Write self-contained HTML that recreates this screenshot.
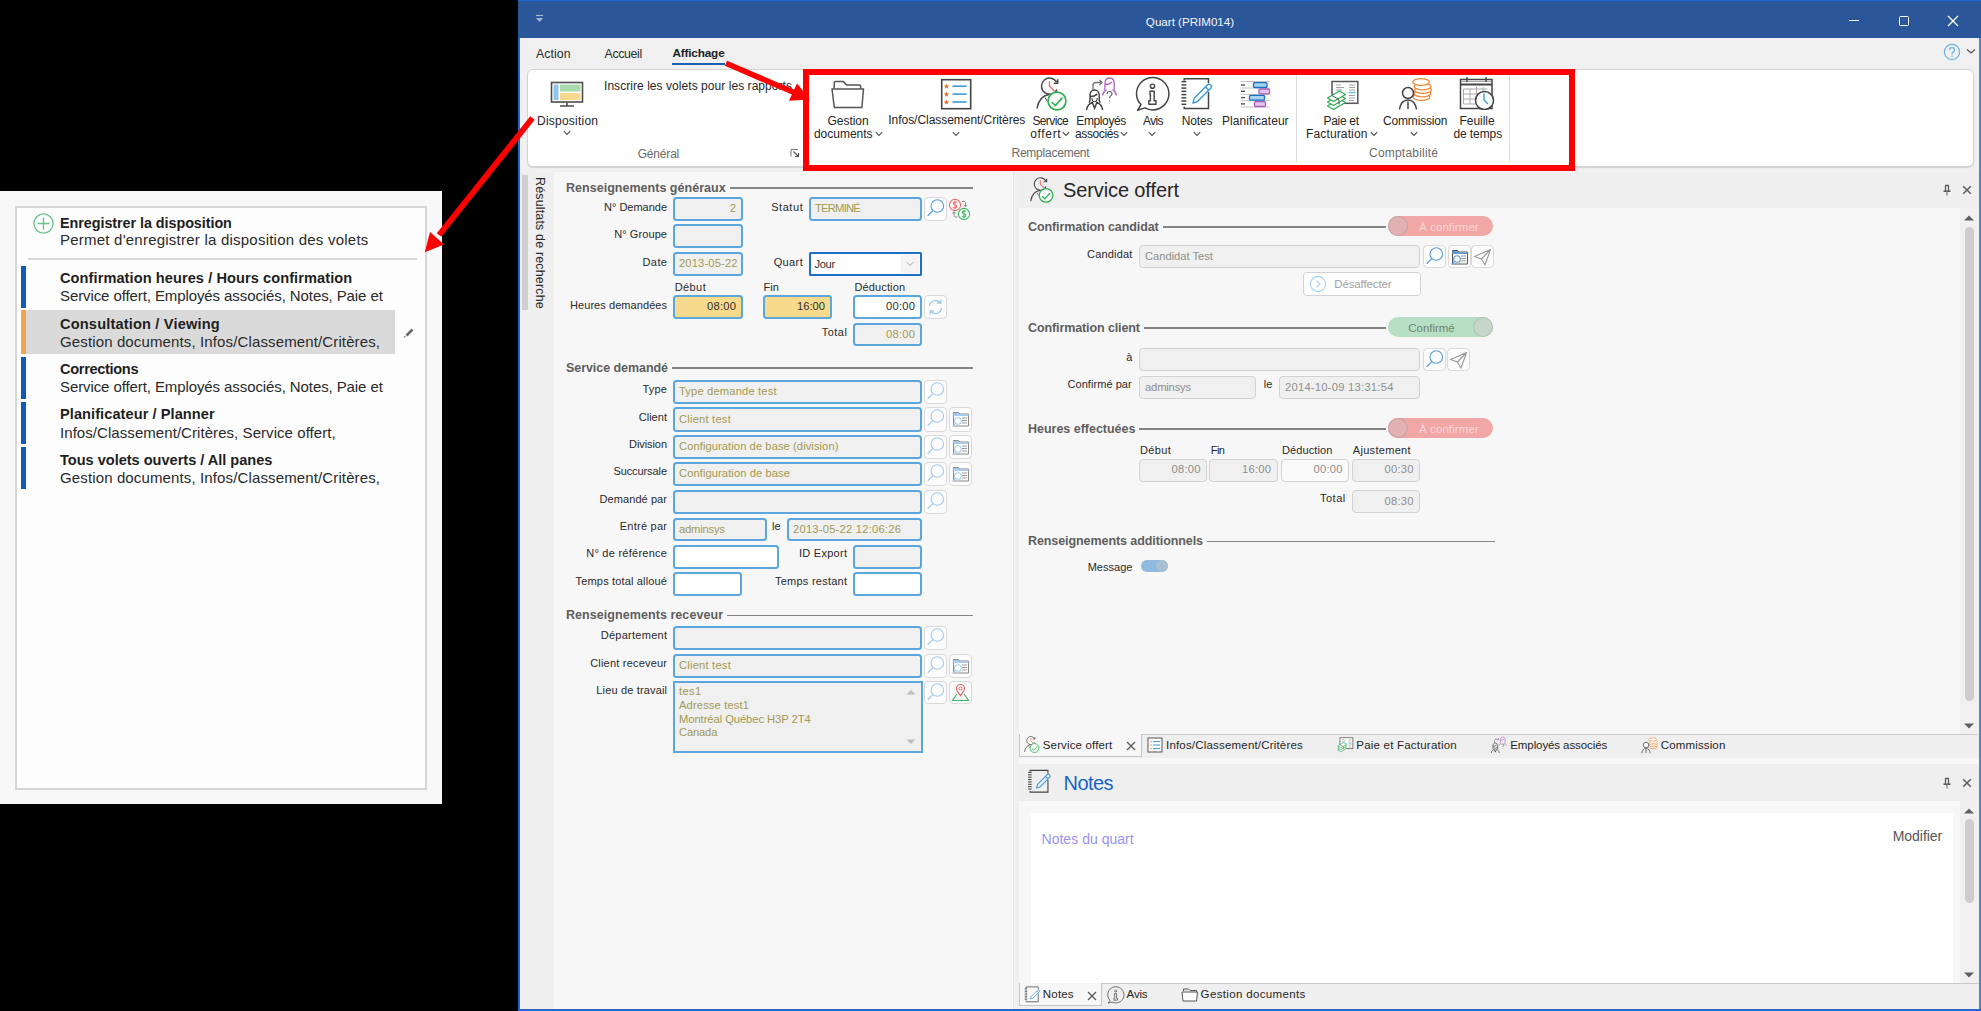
<!DOCTYPE html><html><head><meta charset="utf-8"><style>
html,body{margin:0;padding:0}
body{width:1981px;height:1011px;overflow:hidden;background:#000;position:relative;font-family:"Liberation Sans",sans-serif}
.a{position:absolute;box-sizing:border-box}
.t{position:absolute;white-space:nowrap;font-family:"Liberation Sans",sans-serif}
</style></head><body>
<div class="a" style="left:0px;top:191px;width:442px;height:613px;background:#f8f8f8"></div>
<div class="a" style="left:15px;top:206px;width:412px;height:584px;background:#fdfdfd;border:2px solid #d6d6d6"></div>
<svg class="a" style="left:32px;top:212px;" width="23" height="23" viewBox="0 0 23 23"><circle cx="11.5" cy="11.5" r="9.6" fill="none" stroke="#6cc58c" stroke-width="1.4"/><path d="M11.5 5.5v12M5.5 11.5h12" stroke="#6cc58c" stroke-width="1.4"/></svg>
<div class="t" style="left:60px;top:215.76px;font-size:14.4px;line-height:14.4px;font-weight:700;color:#1f1f1f;letter-spacing:-0.065px;">Enregistrer la disposition</div>
<div class="t" style="left:60px;top:232.25px;font-size:15px;line-height:15px;font-weight:400;color:#2a2a2a;letter-spacing:0.229px;">Permet d'enregistrer la disposition des volets</div>
<div class="a" style="left:28px;top:258px;width:389px;height:2px;background:#d8d8d8"></div>
<div class="a" style="left:21px;top:265.8px;width:5px;height:42px;background:#0f5cb2"></div>
<div class="t" style="left:60px;top:271.19px;font-size:14.6px;line-height:14.6px;font-weight:700;color:#1f1f1f;letter-spacing:0.069px;">Confirmation heures / Hours confirmation</div>
<div class="t" style="left:60px;top:288.35px;font-size:15px;line-height:15px;font-weight:400;color:#2a2a2a;letter-spacing:-0.095px;">Service offert, Employés associés, Notes, Paie et</div>
<div class="a" style="left:26px;top:309.5px;width:369px;height:44.5px;background:#dadada"></div>
<div class="a" style="left:21px;top:309.5px;width:5px;height:44.5px;background:#f0a64c"></div>
<div class="t" style="left:60px;top:316.59px;font-size:14.6px;line-height:14.6px;font-weight:700;color:#1f1f1f;letter-spacing:0.163px;">Consultation / Viewing</div>
<div class="t" style="left:60px;top:333.75px;font-size:15px;line-height:15px;font-weight:400;color:#2a2a2a;letter-spacing:0.13px;">Gestion documents, Infos/Classement/Critères,</div>
<div class="a" style="left:21px;top:356.6px;width:5px;height:42px;background:#0f5cb2"></div>
<div class="t" style="left:60px;top:361.99px;font-size:14.6px;line-height:14.6px;font-weight:700;color:#1f1f1f;letter-spacing:-0.334px;">Corrections</div>
<div class="t" style="left:60px;top:379.15px;font-size:15px;line-height:15px;font-weight:400;color:#2a2a2a;letter-spacing:-0.095px;">Service offert, Employés associés, Notes, Paie et</div>
<div class="a" style="left:21px;top:402.0px;width:5px;height:42px;background:#0f5cb2"></div>
<div class="t" style="left:60px;top:407.39px;font-size:14.6px;line-height:14.6px;font-weight:700;color:#1f1f1f;letter-spacing:0.061px;">Planificateur / Planner</div>
<div class="t" style="left:60px;top:424.55px;font-size:15px;line-height:15px;font-weight:400;color:#2a2a2a;letter-spacing:0.062px;">Infos/Classement/Critères, Service offert,</div>
<div class="a" style="left:21px;top:447.4px;width:5px;height:42px;background:#0f5cb2"></div>
<div class="t" style="left:60px;top:452.79px;font-size:14.6px;line-height:14.6px;font-weight:700;color:#1f1f1f;letter-spacing:-0.029px;">Tous volets ouverts / All panes</div>
<div class="t" style="left:60px;top:469.95px;font-size:15px;line-height:15px;font-weight:400;color:#2a2a2a;letter-spacing:0.13px;">Gestion documents, Infos/Classement/Critères,</div>
<svg class="a" style="left:402px;top:326px;" width="13" height="13" viewBox="0 0 13 13"><path d="M4.5 9.5L10.5 3.5" stroke="#6a6a6a" stroke-width="2.6"/><path d="M2 11.5l1.6-1.6" stroke="#888" stroke-width="1.2"/></svg>
<div class="a" style="left:518px;top:0px;width:1463px;height:1011px;background:#f0f0f0"></div>
<div class="a" style="left:518px;top:0px;width:2px;height:1011px;background:#2a66c9"></div>
<div class="a" style="left:1979px;top:0px;width:2px;height:1011px;background:#4a86d4"></div>
<div class="a" style="left:518px;top:1009px;width:1463px;height:2px;background:#2a66c9"></div>
<div class="a" style="left:518px;top:0px;width:1463px;height:38px;background:#2b579a"></div>
<div class="a" style="left:518px;top:0px;width:1463px;height:1px;background:#1a6ad6"></div>
<div class="t" style="left:790px;width:800px;text-align:center;top:15.94px;font-size:11.6px;line-height:11.6px;font-weight:400;color:#f4f6fa;">Quart (PRIM014)</div>
<svg class="a" style="left:534px;top:13px;" width="11" height="11" viewBox="0 0 11 11"><path d="M2 2.5h7" stroke="#a8b6cc" stroke-width="1.2"/><path d="M2 5l3.5 4 3.5-4z" fill="#a8b6cc"/></svg>
<div class="a" style="left:1849px;top:20px;width:10px;height:1.3px;background:#fff"></div>
<div class="a" style="left:1899px;top:16px;width:10px;height:10px;border:1.3px solid #fff;border-radius:1.5px"></div>
<svg class="a" style="left:1947px;top:15px;" width="12" height="12" viewBox="0 0 12 12"><path d="M1 1L11 11M11 1L1 11" stroke="#fff" stroke-width="1.3"/></svg>
<div class="t" style="left:536px;top:47.95px;font-size:12.3px;line-height:12.3px;font-weight:400;color:#2b2b2b;letter-spacing:0.063px;">Action</div>
<div class="t" style="left:604.6px;top:47.95px;font-size:12.3px;line-height:12.3px;font-weight:400;color:#2b2b2b;letter-spacing:-0.342px;">Accueil</div>
<div class="t" style="left:672.5px;top:48.37px;font-size:11.8px;line-height:11.8px;font-weight:700;color:#1f1f1f;letter-spacing:-0.195px;">Affichage</div>
<div class="a" style="left:672px;top:63px;width:53px;height:2px;background:#1a5fb4"></div>
<svg class="a" style="left:1943px;top:43px;" width="18" height="18" viewBox="0 0 18 18"><circle cx="9" cy="9" r="7.6" fill="none" stroke="#6cb2e4" stroke-width="1.2"/><path d="M6.5 7a2.5 2.5 0 1 1 3.3 2.4c-.6.3-.8.7-.8 1.4v.6" fill="none" stroke="#6cb2e4" stroke-width="1.2"/><circle cx="9" cy="13.3" r=".8" fill="#6cb2e4"/></svg>
<svg class="a" style="left:1966px;top:48px;" width="10" height="7" viewBox="0 0 10 7"><path d="M1 1.5l4 3.5 4-3.5" fill="none" stroke="#555" stroke-width="1.3"/></svg>
<div class="a" style="left:527px;top:69px;width:1447px;height:98px;background:#fff;border:1px solid #d4d4d4;border-radius:6px;box-shadow:0 1px 1px rgba(0,0,0,0.12)"></div>
<svg class="a" style="left:550px;top:81px;" width="34" height="27" viewBox="0 0 34 27"><rect x="1.5" y="1.5" width="31" height="19.5" fill="#fff" stroke="#4d4d4d" stroke-width="1.6"/><rect x="3.5" y="3.5" width="5" height="15.5" fill="#8ec6ee"/><rect x="10" y="3.5" width="20.5" height="7" fill="#a9d9ac"/><rect x="10" y="12" width="20.5" height="7" fill="#f6d98e"/><path d="M17 21.5v3M10 25h14" stroke="#4d4d4d" stroke-width="1.6"/></svg>
<div class="t" style="left:537px;top:114.7px;font-size:12px;line-height:12px;font-weight:400;color:#262626;letter-spacing:0.231px;">Disposition</div>
<svg class="a" style="left:563px;top:130px;" width="8" height="6" viewBox="0 0 8 6"><path d="M0.8 1.2L4 4.4L7.2 1.2" fill="none" stroke="#555" stroke-width="1.2"/></svg>
<div class="t" style="left:604px;top:80.2px;font-size:12px;line-height:12px;font-weight:400;color:#262626;letter-spacing:0.053px;">Inscrire les volets pour les rapports</div>
<div class="t" style="left:637.7px;top:147.7px;font-size:12px;line-height:12px;font-weight:400;color:#6b6b6b;letter-spacing:-0.182px;">Général</div>
<svg class="a" style="left:790px;top:148px;" width="10" height="10" viewBox="0 0 10 10"><path d="M1 8.5V1.5h7" fill="none" stroke="#777" stroke-width="1"/><path d="M3.5 3.5L8.5 8.5M5 8.5h3.5V5" fill="none" stroke="#555" stroke-width="1.2"/></svg>
<svg class="a" style="left:830px;top:80px;" width="36" height="30" viewBox="0 0 36 30"><path d="M4.2 8.5V3.2c0-1 .6-1.6 1.6-1.6h7.4l3.3 3.3h12.7c.9 0 1.5.6 1.5 1.5v2.3" fill="none" stroke="#555" stroke-width="1.5"/><path d="M2 9h31.5l-1.6 18.5H4.3z" fill="#fff" stroke="#555" stroke-width="1.5" stroke-linejoin="round"/></svg>
<div class="t" style="left:827.6px;top:114.5px;font-size:12px;line-height:12px;font-weight:400;color:#262626;letter-spacing:-0.059px;">Gestion</div>
<div class="t" style="left:813.9px;top:128.4px;font-size:12px;line-height:12px;font-weight:400;color:#262626;letter-spacing:0.0px;">documents</div>
<svg class="a" style="left:875px;top:130.7px;" width="8" height="6" viewBox="0 0 8 6"><path d="M0.8 1.2L4 4.4L7.2 1.2" fill="none" stroke="#555" stroke-width="1.2"/></svg>
<svg class="a" style="left:940px;top:78px;" width="33" height="32" viewBox="0 0 33 32"><rect x="1.7" y="1.7" width="29" height="29" fill="#fff" stroke="#444" stroke-width="1.6"/><path d="M6.5 5.6l.8 1.8 1.9.2-1.4 1.3.4 1.9-1.7-1-1.7 1 .4-1.9-1.4-1.3 1.9-.2z" fill="#e8782a"/><path d="M12.5 8.2h14" stroke="#3d9ad6" stroke-width="1.6"/><path d="M6.5 13.500000000000002l.8 1.8 1.9.2-1.4 1.3.4 1.9-1.7-1-1.7 1 .4-1.9-1.4-1.3 1.9-.2z" fill="#e8782a"/><path d="M12.5 16.1h14" stroke="#3d9ad6" stroke-width="1.6"/><path d="M6.5 21.4l.8 1.8 1.9.2-1.4 1.3.4 1.9-1.7-1-1.7 1 .4-1.9-1.4-1.3 1.9-.2z" fill="#e8782a"/><path d="M12.5 24h14" stroke="#3d9ad6" stroke-width="1.6"/></svg>
<div class="t" style="left:888.3px;top:114.4px;font-size:12px;line-height:12px;font-weight:400;color:#262626;letter-spacing:-0.044px;">Infos/Classement/Critères</div>
<svg class="a" style="left:951.7px;top:130.7px;" width="8" height="6" viewBox="0 0 8 6"><path d="M0.8 1.2L4 4.4L7.2 1.2" fill="none" stroke="#555" stroke-width="1.2"/></svg>
<svg class="a" style="left:1036px;top:77px;" width="34" height="34" viewBox="0 0 34 34"><path d="M21 12.5A8.1 8.1 0 1 1 20.7 5.2" fill="none" stroke="#4a4a4a" stroke-width="1.5"/><path d="M17.8 6.2h3.9V2.3" fill="none" stroke="#4a4a4a" stroke-width="1.6"/><path d="M13.5 4.3v4.9l5 5" fill="none" stroke="#ee6e6e" stroke-width="1.4"/><path d="M1 31.5c1.2-7.5 5.5-13 12-14" fill="none" stroke="#4a4a4a" stroke-width="1.5"/><path d="M9 20.5l2.5 4" stroke="#4a4a4a" stroke-width="1"/><circle cx="21" cy="24" r="8.9" fill="#fff" stroke="#2fae52" stroke-width="1.7"/><path d="M15.7 25l3.6 3.5 7.2-7.8" fill="none" stroke="#2fae52" stroke-width="1.7"/></svg>
<div class="t" style="left:1032.4px;top:114.9px;font-size:12px;line-height:12px;font-weight:400;color:#262626;letter-spacing:-0.602px;">Service</div>
<div class="t" style="left:1030.3px;top:128.4px;font-size:12px;line-height:12px;font-weight:400;color:#262626;letter-spacing:0.634px;">offert</div>
<svg class="a" style="left:1062px;top:130.7px;" width="8" height="6" viewBox="0 0 8 6"><path d="M0.8 1.2L4 4.4L7.2 1.2" fill="none" stroke="#555" stroke-width="1.2"/></svg>
<svg class="a" style="left:1084px;top:76px;" width="36" height="36" viewBox="0 0 36 36"><g transform="translate(-3,-1.5)"><path d="M9 20.5c0-3 2-5 4.6-5s4.6 2 4.6 5v5.5c0 1 .8 1.5 1.2 2M9 20.5v5.5c0 1-.8 1.5-1.2 2M9.5 22c2.4 0 5.2-.8 6.6-2.5" fill="none" stroke="#3c3c3c" stroke-width="1.4"/><path d="M11 23.5c0 2 1 3.8 2.6 3.8s2.6-1.8 2.6-3.8" fill="none" stroke="#3c3c3c" stroke-width="1.1"/><path d="M5.5 35.5c.6-4 3-6.5 5.8-7.5l2.3 5.8 2.3-5.8c2.8 1 5.2 3.5 5.8 7.5" fill="none" stroke="#3c3c3c" stroke-width="1.4"/><path d="M12 15.5V11c0-2 1.2-3 3-3h5.5M18.5 5.5l2.6 2.5-2.6 2.5" fill="none" stroke="#777" stroke-width="1.4"/><path d="M24 9c0-3.5 2-5.5 4.6-5.5s4.6 2 4.6 5.5v4.5c0 1 .6 1.3 1 1.6M24 9v4.5c0 1-.6 1.3-1 1.6M24.5 10c2.2 0 4.8-.7 6.4-2.5" fill="none" stroke="#b165c2" stroke-width="1.3"/><path d="M21.5 21c.5-3 2-4.8 4-5.8M35.5 21c-.5-3-2-4.8-4-5.8" fill="none" stroke="#b165c2" stroke-width="1.3"/><path d="M26.2 19.5c0-1.5 1.1-2.5 2.4-2.5s2.4 1 2.4 2.3c0 1.8-2.4 2-2.4 4.2M28.6 26.2v.8" fill="none" stroke="#666" stroke-width="1.2"/></g></svg>
<div class="t" style="left:1076.3px;top:114.9px;font-size:12px;line-height:12px;font-weight:400;color:#262626;letter-spacing:-0.384px;">Employés</div>
<div class="t" style="left:1075.1px;top:128.4px;font-size:12px;line-height:12px;font-weight:400;color:#262626;letter-spacing:-0.398px;">associés</div>
<svg class="a" style="left:1120px;top:130.7px;" width="8" height="6" viewBox="0 0 8 6"><path d="M0.8 1.2L4 4.4L7.2 1.2" fill="none" stroke="#555" stroke-width="1.2"/></svg>
<svg class="a" style="left:1135px;top:76px;" width="36" height="36" viewBox="0 0 36 36"><path d="M6 28.5C3 25.5 1.5 21.7 1.5 17.7 1.5 8.8 8.8 1.5 17.7 1.5S33.9 8.8 33.9 17.7 26.6 33.9 17.7 33.9c-2.8 0-5.5-.7-7.8-2L2.5 34.3z" fill="none" stroke="#444" stroke-width="1.5" stroke-linejoin="round"/><circle cx="17.5" cy="10.2" r="2.1" fill="none" stroke="#444" stroke-width="1.4"/><path d="M15 15.3h4.2v9.4h1.8v3.6h-7.2v-3.6h1.6v-5.8H15z" fill="none" stroke="#444" stroke-width="1.4" stroke-linejoin="round"/></svg>
<div class="t" style="left:1143px;top:114.9px;font-size:12px;line-height:12px;font-weight:400;color:#262626;letter-spacing:-0.618px;">Avis</div>
<svg class="a" style="left:1148.4px;top:130.6px;" width="8" height="6" viewBox="0 0 8 6"><path d="M0.8 1.2L4 4.4L7.2 1.2" fill="none" stroke="#555" stroke-width="1.2"/></svg>
<svg class="a" style="left:1180px;top:77px;" width="34" height="34" viewBox="0 0 34 34"><path d="M4.2 3.5V1.8h24.3v4.5M28.5 15v16.5H4.2v-1.7" fill="none" stroke="#444" stroke-width="1.5"/><path d="M1.5 4.6h4.8" stroke="#444" stroke-width="1.5"/><path d="M1.5 7.9h4.8" stroke="#444" stroke-width="1.5"/><path d="M1.5 11.1h4.8" stroke="#444" stroke-width="1.5"/><path d="M1.5 14.3h4.8" stroke="#444" stroke-width="1.5"/><path d="M1.5 17.6h4.8" stroke="#444" stroke-width="1.5"/><path d="M1.5 20.8h4.8" stroke="#444" stroke-width="1.5"/><path d="M1.5 24h4.8" stroke="#444" stroke-width="1.5"/><path d="M1.5 27.3h4.8" stroke="#444" stroke-width="1.5"/><path d="M13 26l1.2-4.8 13.4-13.4c.8-.8 2-.8 2.8 0l.5.5c.8.8.8 2 0 2.8L17.5 24.5zM25.5 10l3.3 3.3" fill="none" stroke="#3a9ad9" stroke-width="1.4" stroke-linejoin="round"/></svg>
<div class="t" style="left:1181.7px;top:114.9px;font-size:12px;line-height:12px;font-weight:400;color:#262626;letter-spacing:-0.112px;">Notes</div>
<svg class="a" style="left:1192.9px;top:130.6px;" width="8" height="6" viewBox="0 0 8 6"><path d="M0.8 1.2L4 4.4L7.2 1.2" fill="none" stroke="#555" stroke-width="1.2"/></svg>
<svg class="a" style="left:1239px;top:79px;" width="33" height="30" viewBox="0 0 33 30"><path d="M1.5 2.5h29" stroke="#c4c4c4" stroke-width="1"/><path d="M1.5 9h29" stroke="#c4c4c4" stroke-width="1"/><path d="M1.5 15.4h29" stroke="#c4c4c4" stroke-width="1"/><path d="M1.5 21.7h29" stroke="#c4c4c4" stroke-width="1"/><path d="M1.5 28h29" stroke="#c4c4c4" stroke-width="1"/><path d="M2 6h4" stroke="#555" stroke-width="1.4"/><path d="M2 12.3h4" stroke="#555" stroke-width="1.4"/><path d="M2 18.6h4" stroke="#555" stroke-width="1.4"/><path d="M2 24.9h4" stroke="#555" stroke-width="1.4"/><rect x="14.5" y="3.7" width="13.5" height="4.8" rx="1" fill="#a8d4f2" stroke="#1b6ec2" stroke-width="1.3"/><rect x="20" y="10" width="10.5" height="4.8" rx="1" fill="#e6c4ea" stroke="#a95cb9" stroke-width="1.3"/><rect x="10.5" y="16.4" width="15" height="4.8" rx="1" fill="#a8d4f2" stroke="#1b6ec2" stroke-width="1.3"/><rect x="15.5" y="22.7" width="11" height="4.8" rx="1" fill="#e6c4ea" stroke="#a95cb9" stroke-width="1.3"/></svg>
<div class="t" style="left:1222px;top:114.9px;font-size:12px;line-height:12px;font-weight:400;color:#262626;letter-spacing:0.047px;">Planificateur</div>
<div class="a" style="left:1296px;top:75px;width:1px;height:87px;background:#dcdcdc"></div>
<div class="t" style="left:1011.5px;top:147.1px;font-size:12px;line-height:12px;font-weight:400;color:#6b6b6b;letter-spacing:-0.237px;">Remplacement</div>
<svg class="a" style="left:1325.5px;top:80px;" width="34" height="32" viewBox="0 0 34 32"><rect x="6" y="1.5" width="25.8" height="21.8" fill="#fff" stroke="#555" stroke-width="1.5"/><path d="M10 5h5M10 7.5h8M10 10h6M23 5h6M23 7.5h6M23 10h6M23 15.5h6M23 18h6M23 20.5h5" stroke="#9a9a9a" stroke-width="0.9"/><path d="M22.5 12.5h7" stroke="#6cc3dc" stroke-width="1.6"/><path d="M1.5 26l12-7 6 3.5-12 7z" fill="#fff" stroke="#2fae52" stroke-width="1.3" stroke-linejoin="round"/><path d="M1.5 22l12-7 6 3.5-12 7z" fill="#fff" stroke="#2fae52" stroke-width="1.3" stroke-linejoin="round"/><path d="M1.5 18l12-7 6 3.5-12 7z" fill="#fff" stroke="#2fae52" stroke-width="1.3" stroke-linejoin="round"/><path d="M6 15.5l7 4v5" fill="none" stroke="#555" stroke-width="1"/></svg>
<div class="t" style="left:1323.5px;top:114.9px;font-size:12px;line-height:12px;font-weight:400;color:#262626;letter-spacing:-0.31px;">Paie et</div>
<div class="t" style="left:1306px;top:128.4px;font-size:12px;line-height:12px;font-weight:400;color:#262626;letter-spacing:0.137px;">Facturation</div>
<svg class="a" style="left:1370px;top:130.7px;" width="8" height="6" viewBox="0 0 8 6"><path d="M0.8 1.2L4 4.4L7.2 1.2" fill="none" stroke="#555" stroke-width="1.2"/></svg>
<svg class="a" style="left:1398px;top:77px;" width="36" height="34" viewBox="0 0 36 34"><ellipse cx="23.5" cy="20" rx="8.3" ry="3.3" fill="#fff" stroke="#ef8a3a" stroke-width="1.3"/><ellipse cx="24.5" cy="16.5" rx="8.3" ry="3.3" fill="#fff" stroke="#ef8a3a" stroke-width="1.3"/><ellipse cx="25" cy="13" rx="8.3" ry="3.3" fill="#fff" stroke="#ef8a3a" stroke-width="1.3"/><ellipse cx="24.5" cy="9.5" rx="8.3" ry="3.3" fill="#fff" stroke="#ef8a3a" stroke-width="1.3"/><ellipse cx="23" cy="5" rx="8.3" ry="3.3" fill="#fff" stroke="#ef8a3a" stroke-width="1.3"/><circle cx="10" cy="16" r="5.5" fill="#fff" stroke="#444" stroke-width="1.5"/><path d="M1.5 32.5c.8-6 4-9.5 8.5-9.5s7.7 3.5 8.5 9.5M10 24.5v7.5" fill="none" stroke="#444" stroke-width="1.5"/></svg>
<div class="t" style="left:1383.1px;top:114.9px;font-size:12px;line-height:12px;font-weight:400;color:#262626;letter-spacing:-0.19px;">Commission</div>
<svg class="a" style="left:1410.3px;top:130.6px;" width="8" height="6" viewBox="0 0 8 6"><path d="M0.8 1.2L4 4.4L7.2 1.2" fill="none" stroke="#555" stroke-width="1.2"/></svg>
<svg class="a" style="left:1459px;top:76px;" width="36" height="34" viewBox="0 0 36 34"><rect x="1.5" y="3.5" width="31.5" height="29" fill="#fff" stroke="#444" stroke-width="1.5"/><path d="M1.5 8.5h31.5" stroke="#444" stroke-width="2"/><path d="M2 5.5h30" stroke="#aaa" stroke-width="1"/><path d="M8 1v5M27 1v5" stroke="#444" stroke-width="1.4"/><path d="M4.5 13h24M4.5 18h24M4.5 23h24M4.5 28h24M4.5 13v15M11 13v15M17.5 11v17M24 11v17" stroke="#aaa" stroke-width="1"/><circle cx="25.5" cy="24.5" r="9" fill="#fff" stroke="#444" stroke-width="1.5"/><path d="M25 17.5v6.5l4 4" fill="none" stroke="#3a9ad9" stroke-width="1.4"/></svg>
<div class="t" style="left:1459.5px;top:114.9px;font-size:12px;line-height:12px;font-weight:400;color:#262626;letter-spacing:-0.042px;">Feuille</div>
<div class="t" style="left:1453.4px;top:128.4px;font-size:12px;line-height:12px;font-weight:400;color:#262626;letter-spacing:-0.08px;">de temps</div>
<div class="a" style="left:1509px;top:75px;width:1px;height:87px;background:#dcdcdc"></div>
<div class="t" style="left:1369px;top:147.1px;font-size:12px;line-height:12px;font-weight:400;color:#6b6b6b;letter-spacing:0.209px;">Comptabilité</div>
<div class="a" style="left:520px;top:172px;width:34px;height:837px;background:#efefef"></div>
<div class="a" style="left:522px;top:175px;width:6px;height:135px;background:#cfcfcf"></div>
<div class="t" style="left:540px;top:177px;transform-origin:0 0;transform:rotate(90deg) translate(0,-7px);font-size:12.5px;line-height:14px;color:#2a2a2a;letter-spacing:0.15px">Résultats de recherche</div>
<div class="a" style="left:554px;top:172px;width:459px;height:837px;background:#f7f7f7"></div>
<div class="a" style="left:1013px;top:172px;width:6px;height:837px;background:#f0f0f0"></div>
<div class="t" style="left:566px;top:181.88px;font-size:12.5px;line-height:12.5px;font-weight:700;color:#5e5e5e;letter-spacing:0.024px;">Renseignements généraux</div>
<div class="a" style="left:729.6px;top:187.3px;width:243.39999999999998px;height:1.5px;background:#858585"></div>
<div class="t" style="right:1314px;top:201.65px;font-size:11px;line-height:11px;font-weight:400;color:#2a2a2a;letter-spacing:-0.011px;margin-right:0.011px;">N° Demande</div>
<div class="a" style="left:673px;top:197px;width:70px;height:24px;background:#f0f0f0;border:2px solid #5aa6dd;border-radius:3.5px"></div>
<div class="t" style="right:1245px;top:203.38px;font-size:11.2px;line-height:11.2px;font-weight:400;color:#a29a52;">2</div>
<div class="t" style="right:1178.3px;top:201.65px;font-size:11px;line-height:11px;font-weight:400;color:#2a2a2a;letter-spacing:0.552px;margin-right:-0.552px;">Statut</div>
<div class="a" style="left:809px;top:197px;width:113px;height:24px;background:#f0f0f0;border:2px solid #5aa6dd;border-radius:3.5px"></div>
<div class="t" style="left:815px;top:203.38px;font-size:11.2px;line-height:11.2px;font-weight:400;color:#a29a52;letter-spacing:-0.767px;">TERMINÉ</div>
<div class="a" style="left:924px;top:197px;width:23px;height:24px;background:#fcfcfc;border:1px solid #d9d9d9;border-radius:4px"></div>
<svg class="a" style="left:924px;top:197px;" width="23" height="24" viewBox="0 0 23 24"><circle cx="13.3" cy="9" r="6.3" fill="none" stroke="#5b9bd5" stroke-width="1.1"/><path d="M8.8 13.6L3.7 18.8" stroke="#5b9bd5" stroke-width="1.3"/></svg>
<svg class="a" style="left:948px;top:197px;" width="24" height="24" viewBox="0 0 24 24"><circle cx="7" cy="8" r="5.6" fill="#fff" stroke="#ef6b6b" stroke-width="1.1"/><path d="M9 5.5c-.5-.8-3.5-1.2-3.8.6-.3 1.9 3.6 1.3 3.6 3.5 0 1.8-3.3 1.8-4 .6M7 3.8v8.4" fill="none" stroke="#ef6b6b" stroke-width="1.1"/><circle cx="16" cy="17" r="5.6" fill="#fff" stroke="#3fb564" stroke-width="1.1"/><path d="M18 14.5c-.5-.8-3.5-1.2-3.8.6-.3 1.9 3.6 1.3 3.6 3.5 0 1.8-3.3 1.8-4 .6M16 12.8v8.4" fill="none" stroke="#3fb564" stroke-width="1.1"/><path d="M14 4.5h2c1 0 1.5.6 1.5 1.5v3.5M15.8 8l1.7 1.8 1.7-1.8M9.5 20h-2c-1 0-1.5-.6-1.5-1.5V15M4.3 16.5L6 14.7l1.7 1.8" fill="none" stroke="#888" stroke-width="1"/></svg>
<div class="t" style="right:1314px;top:228.85px;font-size:11px;line-height:11px;font-weight:400;color:#2a2a2a;letter-spacing:0.089px;margin-right:-0.089px;">N° Groupe</div>
<div class="a" style="left:673px;top:224px;width:70px;height:24px;background:#f0f0f0;border:2px solid #5aa6dd;border-radius:3.5px"></div>
<div class="t" style="right:1314px;top:256.65px;font-size:11px;line-height:11px;font-weight:400;color:#2a2a2a;letter-spacing:0.422px;margin-right:-0.422px;">Date</div>
<div class="a" style="left:673px;top:252px;width:70px;height:24px;background:#f0f0f0;border:2px solid #5aa6dd;border-radius:3.5px"></div>
<div class="t" style="left:679px;top:258.38px;font-size:11.2px;line-height:11.2px;font-weight:400;color:#a29a52;letter-spacing:0.145px;">2013-05-22</div>
<div class="t" style="right:1178.3px;top:256.65px;font-size:11px;line-height:11px;font-weight:400;color:#2a2a2a;letter-spacing:0.372px;margin-right:-0.372px;">Quart</div>
<div class="a" style="left:809px;top:252px;width:113px;height:24px;background:#fff;border:2px solid #1f6fc6;border-radius:1.5px"></div>
<div class="t" style="left:814.5px;top:259.08px;font-size:11.2px;line-height:11.2px;font-weight:400;color:#333;letter-spacing:-0.363px;">Jour</div>
<div class="a" style="left:901px;top:255px;width:18px;height:18px;background:#f4f4f4"></div>
<svg class="a" style="left:905px;top:260px;" width="10" height="8" viewBox="0 0 10 8"><path d="M1.5 2l3.5 3.5L8.5 2" fill="none" stroke="#aaa" stroke-width="1"/></svg>
<div class="t" style="left:674.7px;top:282.35px;font-size:11px;line-height:11px;font-weight:400;color:#2a2a2a;letter-spacing:0.412px;">Début</div>
<div class="t" style="left:763.6px;top:282.35px;font-size:11px;line-height:11px;font-weight:400;color:#2a2a2a;letter-spacing:-0.04px;">Fin</div>
<div class="t" style="left:854.5px;top:282.35px;font-size:11px;line-height:11px;font-weight:400;color:#2a2a2a;letter-spacing:0.121px;">Déduction</div>
<div class="t" style="right:1314px;top:299.55px;font-size:11px;line-height:11px;font-weight:400;color:#2a2a2a;letter-spacing:0.066px;margin-right:-0.066px;">Heures demandées</div>
<div class="a" style="left:673px;top:295px;width:70px;height:24px;background:#f8da8c;border:2px solid #5aa6dd;border-radius:3.5px"></div>
<div class="t" style="right:1245px;top:301.38px;font-size:11.2px;line-height:11.2px;font-weight:400;color:#2e2e2e;letter-spacing:0.243px;margin-right:-0.243px;">08:00</div>
<div class="a" style="left:763px;top:295px;width:69px;height:24px;background:#f8da8c;border:2px solid #5aa6dd;border-radius:3.5px"></div>
<div class="t" style="right:1156px;top:301.38px;font-size:11.2px;line-height:11.2px;font-weight:400;color:#2e2e2e;letter-spacing:-0.007px;margin-right:0.007px;">16:00</div>
<div class="a" style="left:853px;top:295px;width:69px;height:24px;background:#ffffff;border:2px solid #5aa6dd;border-radius:3.5px"></div>
<div class="t" style="right:1066px;top:301.38px;font-size:11.2px;line-height:11.2px;font-weight:400;color:#2e2e2e;letter-spacing:0.243px;margin-right:-0.243px;">00:00</div>
<div class="a" style="left:924px;top:295px;width:23px;height:24px;background:#fcfcfc;border:1px solid #d9d9d9;border-radius:4px"></div>
<svg class="a" style="left:924px;top:295px;" width="23" height="24" viewBox="0 0 23 24"><path d="M5.5 11a6 6 0 0 1 10.5-3.5M17.5 13a6 6 0 0 1-10.5 3.5" fill="none" stroke="#9cc8ea" stroke-width="1.3"/><path d="M16.8 4.5v3.5h-3.5M6.2 19.5V16h3.5" fill="none" stroke="#9cc8ea" stroke-width="1.3"/></svg>
<div class="t" style="right:1134.1px;top:327.25px;font-size:11px;line-height:11px;font-weight:400;color:#2a2a2a;letter-spacing:0.491px;margin-right:-0.491px;">Total</div>
<div class="a" style="left:853px;top:323px;width:69px;height:23px;background:#f0f0f0;border:2px solid #5aa6dd;border-radius:3.5px"></div>
<div class="t" style="right:1066px;top:328.88px;font-size:11.2px;line-height:11.2px;font-weight:400;color:#a29a52;letter-spacing:0.243px;margin-right:-0.243px;">08:00</div>
<div class="t" style="left:566px;top:361.68px;font-size:12.5px;line-height:12.5px;font-weight:700;color:#5e5e5e;letter-spacing:-0.059px;">Service demandé</div>
<div class="a" style="left:672px;top:367.3px;width:301px;height:1.5px;background:#858585"></div>
<div class="t" style="right:1314px;top:384.35px;font-size:11px;line-height:11px;font-weight:400;color:#2a2a2a;letter-spacing:0.217px;margin-right:-0.217px;">Type</div>
<div class="a" style="left:673px;top:380px;width:249px;height:24px;background:#f0f0f0;border:2px solid #5aa6dd;border-radius:3.5px"></div>
<div class="t" style="left:679px;top:386.38px;font-size:11.2px;line-height:11.2px;font-weight:400;color:#a29a52;letter-spacing:0.152px;">Type demande test</div>
<div class="a" style="left:924px;top:380px;width:23px;height:24px;background:#fcfcfc;border:1px solid #d9d9d9;border-radius:4px"></div>
<svg class="a" style="left:924px;top:380px;" width="23" height="24" viewBox="0 0 23 24"><circle cx="13.3" cy="9" r="6.3" fill="none" stroke="#a6cbec" stroke-width="1.1"/><path d="M8.8 13.6L3.7 18.8" stroke="#a6cbec" stroke-width="1.3"/></svg>
<div class="t" style="right:1314px;top:411.65px;font-size:11px;line-height:11px;font-weight:400;color:#2a2a2a;letter-spacing:0.035px;margin-right:-0.035px;">Client</div>
<div class="a" style="left:673px;top:407px;width:249px;height:24.5px;background:#f0f0f0;border:2px solid #5aa6dd;border-radius:3.5px"></div>
<div class="t" style="left:679px;top:413.63px;font-size:11.2px;line-height:11.2px;font-weight:400;color:#a29a52;letter-spacing:0.2px;">Client test</div>
<div class="a" style="left:924px;top:407px;width:23px;height:24.5px;background:#fcfcfc;border:1px solid #d9d9d9;border-radius:4px"></div>
<svg class="a" style="left:924px;top:407px;" width="23" height="24" viewBox="0 0 23 24"><circle cx="13.3" cy="9" r="6.3" fill="none" stroke="#a6cbec" stroke-width="1.1"/><path d="M8.8 13.6L3.7 18.8" stroke="#a6cbec" stroke-width="1.3"/></svg>
<div class="a" style="left:949px;top:407px;width:23px;height:24.5px;background:#fcfcfc;border:1px solid #d9d9d9;border-radius:4px"></div>
<svg class="a" style="left:949px;top:407px;" width="23" height="24.5" viewBox="0 0 23 24.5"><path d="M4.5 7.5V5.5h5l1.5 1.5h8.5v12h-15z" fill="#fff" stroke="#8a8a8a" stroke-width="1"/><path d="M4.5 6h5l1.5 1.5h8.5v1.5h-15z" fill="#a6cbec"/><path d="M13 11h5M13 13.5h5M13 16h5" stroke="#999" stroke-width="1"/><circle cx="9" cy="14" r="3.3" fill="none" stroke="#a6cbec" stroke-width="1.1"/><path d="M6.7 16.3L3.5 19.5" stroke="#a6cbec" stroke-width="1.2"/></svg>
<div class="t" style="right:1314px;top:438.95px;font-size:11px;line-height:11px;font-weight:400;color:#2a2a2a;letter-spacing:-0.087px;margin-right:0.087px;">Division</div>
<div class="a" style="left:673px;top:435px;width:249px;height:24px;background:#f0f0f0;border:2px solid #5aa6dd;border-radius:3.5px"></div>
<div class="t" style="left:679px;top:441.38px;font-size:11.2px;line-height:11.2px;font-weight:400;color:#a29a52;letter-spacing:0.067px;">Configuration de base (division)</div>
<div class="a" style="left:924px;top:435px;width:23px;height:24px;background:#fcfcfc;border:1px solid #d9d9d9;border-radius:4px"></div>
<svg class="a" style="left:924px;top:435px;" width="23" height="24" viewBox="0 0 23 24"><circle cx="13.3" cy="9" r="6.3" fill="none" stroke="#a6cbec" stroke-width="1.1"/><path d="M8.8 13.6L3.7 18.8" stroke="#a6cbec" stroke-width="1.3"/></svg>
<div class="a" style="left:949px;top:435px;width:23px;height:24px;background:#fcfcfc;border:1px solid #d9d9d9;border-radius:4px"></div>
<svg class="a" style="left:949px;top:435px;" width="23" height="24" viewBox="0 0 23 24"><path d="M4.5 7.5V5.5h5l1.5 1.5h8.5v12h-15z" fill="#fff" stroke="#8a8a8a" stroke-width="1"/><path d="M4.5 6h5l1.5 1.5h8.5v1.5h-15z" fill="#a6cbec"/><path d="M13 11h5M13 13.5h5M13 16h5" stroke="#999" stroke-width="1"/><circle cx="9" cy="14" r="3.3" fill="none" stroke="#a6cbec" stroke-width="1.1"/><path d="M6.7 16.3L3.5 19.5" stroke="#a6cbec" stroke-width="1.2"/></svg>
<div class="t" style="right:1314px;top:466.25px;font-size:11px;line-height:11px;font-weight:400;color:#2a2a2a;letter-spacing:-0.091px;margin-right:0.091px;">Succursale</div>
<div class="a" style="left:673px;top:462px;width:249px;height:24px;background:#f0f0f0;border:2px solid #5aa6dd;border-radius:3.5px"></div>
<div class="t" style="left:679px;top:468.38px;font-size:11.2px;line-height:11.2px;font-weight:400;color:#a29a52;letter-spacing:0.071px;">Configuration de base</div>
<div class="a" style="left:924px;top:462px;width:23px;height:24px;background:#fcfcfc;border:1px solid #d9d9d9;border-radius:4px"></div>
<svg class="a" style="left:924px;top:462px;" width="23" height="24" viewBox="0 0 23 24"><circle cx="13.3" cy="9" r="6.3" fill="none" stroke="#a6cbec" stroke-width="1.1"/><path d="M8.8 13.6L3.7 18.8" stroke="#a6cbec" stroke-width="1.3"/></svg>
<div class="a" style="left:949px;top:462px;width:23px;height:24px;background:#fcfcfc;border:1px solid #d9d9d9;border-radius:4px"></div>
<svg class="a" style="left:949px;top:462px;" width="23" height="24" viewBox="0 0 23 24"><path d="M4.5 7.5V5.5h5l1.5 1.5h8.5v12h-15z" fill="#fff" stroke="#8a8a8a" stroke-width="1"/><path d="M4.5 6h5l1.5 1.5h8.5v1.5h-15z" fill="#a6cbec"/><path d="M13 11h5M13 13.5h5M13 16h5" stroke="#999" stroke-width="1"/><circle cx="9" cy="14" r="3.3" fill="none" stroke="#a6cbec" stroke-width="1.1"/><path d="M6.7 16.3L3.5 19.5" stroke="#a6cbec" stroke-width="1.2"/></svg>
<div class="t" style="right:1314px;top:494.35px;font-size:11px;line-height:11px;font-weight:400;color:#2a2a2a;letter-spacing:0.075px;margin-right:-0.075px;">Demandé par</div>
<div class="a" style="left:673px;top:490px;width:249px;height:23.5px;background:#f0f0f0;border:2px solid #5aa6dd;border-radius:3.5px"></div>
<div class="a" style="left:924px;top:490px;width:23px;height:23.5px;background:#fcfcfc;border:1px solid #d9d9d9;border-radius:4px"></div>
<svg class="a" style="left:924px;top:490px;" width="23" height="24" viewBox="0 0 23 24"><circle cx="13.3" cy="9" r="6.3" fill="none" stroke="#a6cbec" stroke-width="1.1"/><path d="M8.8 13.6L3.7 18.8" stroke="#a6cbec" stroke-width="1.3"/></svg>
<div class="t" style="right:1314px;top:521.05px;font-size:11px;line-height:11px;font-weight:400;color:#2a2a2a;letter-spacing:0.257px;margin-right:-0.257px;">Entré par</div>
<div class="a" style="left:673px;top:517.5px;width:94px;height:23.5px;background:#f0f0f0;border:2px solid #5aa6dd;border-radius:3.5px"></div>
<div class="t" style="left:679px;top:523.63px;font-size:11.2px;line-height:11.2px;font-weight:400;color:#a29a52;letter-spacing:-0.186px;">adminsys</div>
<div class="t" style="left:772px;top:521.05px;font-size:11px;line-height:11px;font-weight:400;color:#2a2a2a;letter-spacing:-0.062px;">le</div>
<div class="a" style="left:787px;top:517.5px;width:135px;height:23.5px;background:#f0f0f0;border:2px solid #5aa6dd;border-radius:3.5px"></div>
<div class="t" style="left:793px;top:523.63px;font-size:11.2px;line-height:11.2px;font-weight:400;color:#a29a52;letter-spacing:0.222px;">2013-05-22 12:06:26</div>
<div class="t" style="right:1314px;top:548.35px;font-size:11px;line-height:11px;font-weight:400;color:#2a2a2a;letter-spacing:0.26px;margin-right:-0.26px;">N° de référence</div>
<div class="a" style="left:673px;top:545px;width:106px;height:23.5px;background:#fff;border:2px solid #5aa6dd;border-radius:3.5px"></div>
<div class="t" style="right:1134px;top:548.35px;font-size:11px;line-height:11px;font-weight:400;color:#2a2a2a;letter-spacing:0.269px;margin-right:-0.269px;">ID Export</div>
<div class="a" style="left:853px;top:545px;width:69px;height:23.5px;background:#f0f0f0;border:2px solid #5aa6dd;border-radius:3.5px"></div>
<div class="t" style="right:1314px;top:575.65px;font-size:11px;line-height:11px;font-weight:400;color:#2a2a2a;letter-spacing:0.161px;margin-right:-0.161px;">Temps total alloué</div>
<div class="a" style="left:673px;top:572px;width:69px;height:23.5px;background:#fff;border:2px solid #5aa6dd;border-radius:3.5px"></div>
<div class="t" style="right:1134px;top:575.65px;font-size:11px;line-height:11px;font-weight:400;color:#2a2a2a;letter-spacing:0.243px;margin-right:-0.243px;">Temps restant</div>
<div class="a" style="left:853px;top:572px;width:69px;height:23.5px;background:#fff;border:2px solid #5aa6dd;border-radius:3.5px"></div>
<div class="t" style="left:566px;top:609.17px;font-size:12.5px;line-height:12.5px;font-weight:700;color:#5e5e5e;letter-spacing:0.062px;">Renseignements receveur</div>
<div class="a" style="left:727px;top:614.5px;width:246px;height:1.5px;background:#858585"></div>
<div class="t" style="right:1314px;top:630.05px;font-size:11px;line-height:11px;font-weight:400;color:#2a2a2a;letter-spacing:0.261px;margin-right:-0.261px;">Département</div>
<div class="a" style="left:673px;top:626px;width:249px;height:24px;background:#f0f0f0;border:2px solid #5aa6dd;border-radius:3.5px"></div>
<div class="a" style="left:924px;top:626px;width:23px;height:24px;background:#fcfcfc;border:1px solid #d9d9d9;border-radius:4px"></div>
<svg class="a" style="left:924px;top:626px;" width="23" height="24" viewBox="0 0 23 24"><circle cx="13.3" cy="9" r="6.3" fill="none" stroke="#a6cbec" stroke-width="1.1"/><path d="M8.8 13.6L3.7 18.8" stroke="#a6cbec" stroke-width="1.3"/></svg>
<div class="t" style="right:1314px;top:657.65px;font-size:11px;line-height:11px;font-weight:400;color:#2a2a2a;letter-spacing:0.202px;margin-right:-0.202px;">Client receveur</div>
<div class="a" style="left:673px;top:654px;width:249px;height:24px;background:#f0f0f0;border:2px solid #5aa6dd;border-radius:3.5px"></div>
<div class="t" style="left:679px;top:660.38px;font-size:11.2px;line-height:11.2px;font-weight:400;color:#a29a52;letter-spacing:0.2px;">Client test</div>
<div class="a" style="left:924px;top:654px;width:23px;height:24px;background:#fcfcfc;border:1px solid #d9d9d9;border-radius:4px"></div>
<svg class="a" style="left:924px;top:654px;" width="23" height="24" viewBox="0 0 23 24"><circle cx="13.3" cy="9" r="6.3" fill="none" stroke="#a6cbec" stroke-width="1.1"/><path d="M8.8 13.6L3.7 18.8" stroke="#a6cbec" stroke-width="1.3"/></svg>
<div class="a" style="left:949px;top:654px;width:23px;height:24px;background:#fcfcfc;border:1px solid #d9d9d9;border-radius:4px"></div>
<svg class="a" style="left:949px;top:654px;" width="23" height="24" viewBox="0 0 23 24"><path d="M4.5 7.5V5.5h5l1.5 1.5h8.5v12h-15z" fill="#fff" stroke="#8a8a8a" stroke-width="1"/><path d="M4.5 6h5l1.5 1.5h8.5v1.5h-15z" fill="#a6cbec"/><path d="M13 11h5M13 13.5h5M13 16h5" stroke="#999" stroke-width="1"/><circle cx="9" cy="14" r="3.3" fill="none" stroke="#a6cbec" stroke-width="1.1"/><path d="M6.7 16.3L3.5 19.5" stroke="#a6cbec" stroke-width="1.2"/></svg>
<div class="t" style="right:1314px;top:684.95px;font-size:11px;line-height:11px;font-weight:400;color:#2a2a2a;letter-spacing:0.158px;margin-right:-0.158px;">Lieu de travail</div>
<div class="a" style="left:673px;top:681px;width:250px;height:72px;background:#f0f0f0;border:2px solid #5aa6dd"></div>
<div class="t" style="left:679px;top:686.48px;font-size:11.2px;line-height:11.2px;font-weight:400;color:#a29a52;letter-spacing:0.377px;">tes1</div>
<div class="t" style="left:679px;top:700.08px;font-size:11.2px;line-height:11.2px;font-weight:400;color:#a29a52;letter-spacing:0.127px;">Adresse test1</div>
<div class="t" style="left:679px;top:713.68px;font-size:11.2px;line-height:11.2px;font-weight:400;color:#a29a52;letter-spacing:-0.056px;">Montréal Québec H3P 2T4</div>
<div class="t" style="left:679px;top:727.28px;font-size:11.2px;line-height:11.2px;font-weight:400;color:#a29a52;letter-spacing:-0.167px;">Canada</div>
<svg class="a" style="left:905px;top:688px;" width="12" height="8" viewBox="0 0 12 8"><path d="M1.5 6.5L6 2l4.5 4.5z" fill="#bdbdbd"/></svg>
<svg class="a" style="left:905px;top:738px;" width="12" height="8" viewBox="0 0 12 8"><path d="M1.5 1.5L6 6l4.5-4.5z" fill="#bdbdbd"/></svg>
<div class="a" style="left:924px;top:681px;width:23px;height:23px;background:#fcfcfc;border:1px solid #d9d9d9;border-radius:4px"></div>
<svg class="a" style="left:924px;top:681px;" width="23" height="24" viewBox="0 0 23 24"><circle cx="13.3" cy="9" r="6.3" fill="none" stroke="#a6cbec" stroke-width="1.1"/><path d="M8.8 13.6L3.7 18.8" stroke="#a6cbec" stroke-width="1.3"/></svg>
<div class="a" style="left:949px;top:681px;width:23px;height:23px;background:#fcfcfc;border:1px solid #d9d9d9;border-radius:4px"></div>
<svg class="a" style="left:949px;top:681px;" width="23" height="23" viewBox="0 0 23 23"><path d="M11.5 14.5c-2.5-3-4-5-4-7a4 4 0 0 1 8 0c0 2-1.5 4-4 7z" fill="none" stroke="#e76464" stroke-width="1.2"/><circle cx="11.5" cy="7.5" r="1.5" fill="none" stroke="#e76464" stroke-width="1"/><path d="M8 13l-4.5 6.5h16L15 13" fill="none" stroke="#46b66a" stroke-width="1.2"/></svg>
<div class="a" style="left:1019px;top:172px;width:960px;height:36px;background:#efefef"></div>
<div class="a" style="left:1019px;top:208px;width:941px;height:526px;background:#f7f7f7"></div>
<div class="a" style="left:1960px;top:208px;width:19px;height:526px;background:#f0f0f0"></div>
<div class="a" style="left:1013px;top:172px;width:1px;height:837px;background:#e4e4e4"></div>
<svg class="a" style="left:1030px;top:176.5px;" width="26" height="26" viewBox="0 0 34 34"><path d="M21 12.5A8.1 8.1 0 1 1 20.7 5.2" fill="none" stroke="#4a4a4a" stroke-width="1.5"/><path d="M17.8 6.2h3.9V2.3" fill="none" stroke="#4a4a4a" stroke-width="1.6"/><path d="M13.5 4.3v4.9l5 5" fill="none" stroke="#ee6e6e" stroke-width="1.4"/><path d="M1 31.5c1.2-7.5 5.5-13 12-14" fill="none" stroke="#4a4a4a" stroke-width="1.5"/><path d="M9 20.5l2.5 4" stroke="#4a4a4a" stroke-width="1"/><circle cx="21" cy="24" r="8.9" fill="#fff" stroke="#2fae52" stroke-width="1.7"/><path d="M15.7 25l3.6 3.5 7.2-7.8" fill="none" stroke="#2fae52" stroke-width="1.7"/></svg>
<div class="t" style="left:1063px;top:180.3px;font-size:20px;line-height:20px;font-weight:400;color:#262626;letter-spacing:-0.112px;">Service offert</div>
<svg class="a" style="left:1940px;top:184px;" width="14" height="14" viewBox="0 0 14 14"><path d="M5 1.5h4M5.5 1.5v5.5M8.5 1.5v5.5" fill="none" stroke="#5e5e5e" stroke-width="1.3"/><path d="M3.5 7.2h7" stroke="#5e5e5e" stroke-width="1.6"/><path d="M7 7.5v4" stroke="#777" stroke-width="1.2"/></svg>
<svg class="a" style="left:1962px;top:185px;" width="10" height="10" viewBox="0 0 10 10"><path d="M1.2 1.2l7.6 7.6M8.8 1.2L1.2 8.8" stroke="#626262" stroke-width="1.6"/></svg>
<svg class="a" style="left:1963px;top:214px;" width="12" height="8" viewBox="0 0 12 8"><path d="M1 6.5L6 1.5l5 5z" fill="#606060"/></svg>
<div class="a" style="left:1965px;top:227px;width:9px;height:474px;background:#cdcdcd;border-radius:4.5px"></div>
<svg class="a" style="left:1963px;top:721.5px;" width="12" height="8" viewBox="0 0 12 8"><path d="M1 1.5L6 6.5l5-5z" fill="#606060"/></svg>
<div class="t" style="left:1028px;top:221.28px;font-size:12.5px;line-height:12.5px;font-weight:700;color:#5e5e5e;letter-spacing:-0.097px;">Confirmation candidat</div>
<div class="a" style="left:1162.7px;top:226.10000000000002px;width:223.29999999999995px;height:1.5px;background:#858585"></div>
<div class="a" style="left:1388px;top:216px;width:105px;height:20px;background:#f2a7a7;border-radius:10.0px"></div>
<div class="a" style="left:1388px;top:216px;width:20px;height:20px;background:#e2b2b2;border-radius:50%;border:1px solid rgba(0,0,0,0.10)"></div>
<div class="t" style="left:1419px;top:221.72px;font-size:11.5px;line-height:11.5px;font-weight:400;color:#fad6d6;letter-spacing:0.091px;">À confirmer</div>
<div class="t" style="right:848.5999999999999px;top:249.05px;font-size:11px;line-height:11px;font-weight:400;color:#2a2a2a;letter-spacing:0.195px;margin-right:-0.195px;">Candidat</div>
<div class="a" style="left:1139px;top:245px;width:281px;height:23px;background:#f0f0f0;border:1px solid #d2d2d2;border-radius:4px"></div>
<div class="t" style="left:1145px;top:250.88px;font-size:11.2px;line-height:11.2px;font-weight:400;color:#8e8e8e;letter-spacing:-0.024px;">Candidat Test</div>
<div class="a" style="left:1423px;top:245px;width:23px;height:23px;background:#fcfcfc;border:1px solid #d9d9d9;border-radius:4px"></div>
<svg class="a" style="left:1423px;top:245px;" width="23" height="24" viewBox="0 0 23 24"><circle cx="13.3" cy="9" r="6.3" fill="none" stroke="#5b9bd5" stroke-width="1.1"/><path d="M8.8 13.6L3.7 18.8" stroke="#5b9bd5" stroke-width="1.3"/></svg>
<div class="a" style="left:1448px;top:245px;width:23px;height:23px;background:#fcfcfc;border:1px solid #d9d9d9;border-radius:4px"></div>
<svg class="a" style="left:1448px;top:245px;" width="23" height="23" viewBox="0 0 23 23"><path d="M4.5 7.5V5.5h5l1.5 1.5h8.5v12h-15z" fill="#fff" stroke="#555" stroke-width="1"/><path d="M4.5 6h5l1.5 1.5h8.5v1.5h-15z" fill="#5b9bd5"/><path d="M13 11h5M13 13.5h5M13 16h5" stroke="#999" stroke-width="1"/><circle cx="9" cy="14" r="3.3" fill="none" stroke="#5b9bd5" stroke-width="1.1"/><path d="M6.7 16.3L3.5 19.5" stroke="#5b9bd5" stroke-width="1.2"/></svg>
<div class="a" style="left:1471px;top:245px;width:23px;height:23px;background:#fcfcfc;border:1px solid #d9d9d9;border-radius:4px"></div>
<svg class="a" style="left:1471px;top:245px;" width="23" height="23" viewBox="0 0 23 23"><path d="M3.5 11.5L19.5 4.5 14 20 10.5 14z M10.5 14L19.5 4.5" fill="none" stroke="#9a9a9a" stroke-width="1.1" stroke-linejoin="round"/></svg>
<div class="a" style="left:1303px;top:272px;width:118px;height:24px;background:#fff;border:1px solid #d2d2d2;border-radius:4px"></div>
<svg class="a" style="left:1309px;top:275px;" width="18" height="18" viewBox="0 0 18 18"><circle cx="9" cy="9" r="7.6" fill="none" stroke="#a9d1ef" stroke-width="1.1"/><path d="M7.5 5.5L11 9l-3.5 3.5" fill="none" stroke="#a9d1ef" stroke-width="1.1"/></svg>
<div class="t" style="left:1334.3px;top:278.93px;font-size:11.5px;line-height:11.5px;font-weight:400;color:#a2a2a2;letter-spacing:-0.13px;">Désaffecter</div>
<div class="t" style="left:1028px;top:322.18px;font-size:12.5px;line-height:12.5px;font-weight:700;color:#5e5e5e;letter-spacing:-0.105px;">Confirmation client</div>
<div class="a" style="left:1144px;top:327.1px;width:242px;height:1.5px;background:#858585"></div>
<div class="a" style="left:1388px;top:317px;width:105px;height:20px;background:#b7dfc3;border-radius:10.0px"></div>
<div class="a" style="left:1473px;top:317px;width:20px;height:20px;background:#c6d6c9;border-radius:50%;border:1px solid rgba(0,0,0,0.10)"></div>
<div class="t" style="left:1408.3px;top:322.73px;font-size:11.5px;line-height:11.5px;font-weight:400;color:#6e8572;letter-spacing:-0.036px;">Confirmé</div>
<div class="t" style="right:848.5999999999999px;top:351.75px;font-size:11px;line-height:11px;font-weight:400;color:#2a2a2a;">à</div>
<div class="a" style="left:1139px;top:348px;width:281px;height:23px;background:#f0f0f0;border:1px solid #d2d2d2;border-radius:4px"></div>
<div class="a" style="left:1423px;top:348px;width:23px;height:23px;background:#fcfcfc;border:1px solid #d9d9d9;border-radius:4px"></div>
<svg class="a" style="left:1423px;top:348px;" width="23" height="24" viewBox="0 0 23 24"><circle cx="13.3" cy="9" r="6.3" fill="none" stroke="#5b9bd5" stroke-width="1.1"/><path d="M8.8 13.6L3.7 18.8" stroke="#5b9bd5" stroke-width="1.3"/></svg>
<div class="a" style="left:1447px;top:348px;width:23px;height:23px;background:#fcfcfc;border:1px solid #d9d9d9;border-radius:4px"></div>
<svg class="a" style="left:1447px;top:348px;" width="23" height="23" viewBox="0 0 23 23"><path d="M3.5 11.5L19.5 4.5 14 20 10.5 14z M10.5 14L19.5 4.5" fill="none" stroke="#9a9a9a" stroke-width="1.1" stroke-linejoin="round"/></svg>
<div class="t" style="right:849.3px;top:379.05px;font-size:11px;line-height:11px;font-weight:400;color:#2a2a2a;letter-spacing:0.057px;margin-right:-0.057px;">Confirmé par</div>
<div class="a" style="left:1139px;top:376px;width:117px;height:23px;background:#f0f0f0;border:1px solid #d2d2d2;border-radius:4px"></div>
<div class="t" style="left:1145px;top:381.88px;font-size:11.2px;line-height:11.2px;font-weight:400;color:#8e8e8e;letter-spacing:-0.158px;">adminsys</div>
<div class="t" style="left:1263.7px;top:379.05px;font-size:11px;line-height:11px;font-weight:400;color:#2a2a2a;letter-spacing:0.238px;">le</div>
<div class="a" style="left:1279px;top:376px;width:141px;height:23px;background:#f0f0f0;border:1px solid #d2d2d2;border-radius:4px"></div>
<div class="t" style="left:1285px;top:381.88px;font-size:11.2px;line-height:11.2px;font-weight:400;color:#8e8e8e;letter-spacing:0.25px;">2014-10-09 13:31:54</div>
<div class="t" style="left:1028px;top:422.98px;font-size:12.5px;line-height:12.5px;font-weight:700;color:#5e5e5e;letter-spacing:-0.018px;">Heures effectuées</div>
<div class="a" style="left:1139.4px;top:428.3px;width:246.5999999999999px;height:1.5px;background:#858585"></div>
<div class="a" style="left:1388px;top:418px;width:105px;height:20px;background:#f2a7a7;border-radius:10.0px"></div>
<div class="a" style="left:1388px;top:418px;width:20px;height:20px;background:#e2b2b2;border-radius:50%;border:1px solid rgba(0,0,0,0.10)"></div>
<div class="t" style="left:1419px;top:423.73px;font-size:11.5px;line-height:11.5px;font-weight:400;color:#fad6d6;letter-spacing:0.091px;">À confirmer</div>
<div class="t" style="left:1140px;top:444.95px;font-size:11px;line-height:11px;font-weight:400;color:#2a2a2a;letter-spacing:0.362px;">Début</div>
<div class="t" style="left:1210.7px;top:444.95px;font-size:11px;line-height:11px;font-weight:400;color:#2a2a2a;letter-spacing:-0.49px;">Fin</div>
<div class="t" style="left:1282px;top:444.95px;font-size:11px;line-height:11px;font-weight:400;color:#2a2a2a;letter-spacing:0.096px;">Déduction</div>
<div class="t" style="left:1352.8px;top:444.95px;font-size:11px;line-height:11px;font-weight:400;color:#2a2a2a;letter-spacing:0.308px;">Ajustement</div>
<div class="a" style="left:1139px;top:458.5px;width:68px;height:23px;background:#f0f0f0;border:1px solid #d2d2d2;border-radius:4px"></div>
<div class="t" style="right:780.5px;top:464.38px;font-size:11.2px;line-height:11.2px;font-weight:400;color:#8e8e8e;letter-spacing:0.243px;margin-right:-0.243px;">08:00</div>
<div class="a" style="left:1209px;top:458.5px;width:68.5px;height:23px;background:#f0f0f0;border:1px solid #d2d2d2;border-radius:4px"></div>
<div class="t" style="right:710.0px;top:464.38px;font-size:11.2px;line-height:11.2px;font-weight:400;color:#8e8e8e;letter-spacing:0.243px;margin-right:-0.243px;">16:00</div>
<div class="a" style="left:1281px;top:458.5px;width:68px;height:23px;background:#fafafa;border:1px solid #d2d2d2;border-radius:4px"></div>
<div class="t" style="right:638.5px;top:464.38px;font-size:11.2px;line-height:11.2px;font-weight:400;color:#8e8e8e;letter-spacing:0.243px;margin-right:-0.243px;">00:00</div>
<div class="a" style="left:1352px;top:458.5px;width:68px;height:23px;background:#f0f0f0;border:1px solid #d2d2d2;border-radius:4px"></div>
<div class="t" style="right:567.5px;top:464.38px;font-size:11.2px;line-height:11.2px;font-weight:400;color:#8e8e8e;letter-spacing:0.243px;margin-right:-0.243px;">00:30</div>
<div class="t" style="right:635.8px;top:492.85px;font-size:11px;line-height:11px;font-weight:400;color:#2a2a2a;letter-spacing:0.491px;margin-right:-0.491px;">Total</div>
<div class="a" style="left:1352px;top:490px;width:68px;height:23px;background:#f0f0f0;border:1px solid #d2d2d2;border-radius:4px"></div>
<div class="t" style="right:567.5px;top:495.88px;font-size:11.2px;line-height:11.2px;font-weight:400;color:#8e8e8e;letter-spacing:0.243px;margin-right:-0.243px;">08:30</div>
<div class="t" style="left:1028px;top:535.27px;font-size:12.5px;line-height:12.5px;font-weight:700;color:#5e5e5e;letter-spacing:-0.081px;">Renseignements additionnels</div>
<div class="a" style="left:1207px;top:540.5999999999999px;width:288px;height:1.5px;background:#858585"></div>
<div class="t" style="right:848.5999999999999px;top:562.25px;font-size:11px;line-height:11px;font-weight:400;color:#2a2a2a;letter-spacing:0.011px;margin-right:-0.011px;">Message</div>
<div class="a" style="left:1140.5px;top:560px;width:27px;height:11.5px;background:#8fb9de;border-radius:6px"></div>
<div class="a" style="left:1156px;top:560px;width:12px;height:11.5px;background:#a9bfd4;border-radius:50%"></div>
<div class="a" style="left:1019px;top:734px;width:959px;height:1px;background:#c9c9c9"></div>
<div class="a" style="left:1019px;top:735px;width:960px;height:23px;background:#efefef"></div>
<div class="a" style="left:1019px;top:734px;width:123px;height:23px;background:#f7f7f7;border:1px solid #c6c6c6;border-top:none"></div>
<svg class="a" style="left:1024px;top:736px;" width="17" height="17" viewBox="0 0 34 34"><path d="M21 12.5A8.1 8.1 0 1 1 20.7 5.2" fill="none" stroke="#4a4a4a" stroke-width="1.5"/><path d="M17.8 6.2h3.9V2.3" fill="none" stroke="#4a4a4a" stroke-width="1.6"/><path d="M13.5 4.3v4.9l5 5" fill="none" stroke="#ee6e6e" stroke-width="1.4"/><path d="M1 31.5c1.2-7.5 5.5-13 12-14" fill="none" stroke="#4a4a4a" stroke-width="1.5"/><path d="M9 20.5l2.5 4" stroke="#4a4a4a" stroke-width="1"/><circle cx="21" cy="24" r="8.9" fill="#fff" stroke="#2fae52" stroke-width="1.7"/><path d="M15.7 25l3.6 3.5 7.2-7.8" fill="none" stroke="#2fae52" stroke-width="1.7"/></svg>
<div class="t" style="left:1042.8px;top:740.43px;font-size:11.5px;line-height:11.5px;font-weight:400;color:#262626;letter-spacing:0.143px;">Service offert</div>
<svg class="a" style="left:1125.5px;top:741px;" width="10" height="10" viewBox="0 0 10 10"><path d="M1 1l8 8M9 1L1 9" stroke="#555" stroke-width="1.2"/></svg>
<svg class="a" style="left:1147px;top:737px;" width="16" height="16" viewBox="0 0 16 16"><rect x="1" y="1" width="14" height="14" fill="#fff" stroke="#555" stroke-width="1"/><path d="M3.5 4.5h1M3.5 8h1M3.5 11.5h1" stroke="#e8782a" stroke-width="1.3"/><path d="M6 4.5h7M6 8h7M6 11.5h7" stroke="#3d9ad6" stroke-width="1"/></svg>
<div class="t" style="left:1166px;top:740.43px;font-size:11.5px;line-height:11.5px;font-weight:400;color:#262626;letter-spacing:0.188px;">Infos/Classement/Critères</div>
<svg class="a" style="left:1337px;top:737px;" width="17" height="16" viewBox="0 0 34 32"><rect x="6" y="1.5" width="25.8" height="21.8" fill="#fff" stroke="#555" stroke-width="1.5"/><path d="M10 5h5M10 7.5h8M10 10h6M23 5h6M23 7.5h6M23 10h6M23 15.5h6M23 18h6M23 20.5h5" stroke="#9a9a9a" stroke-width="0.9"/><path d="M22.5 12.5h7" stroke="#6cc3dc" stroke-width="1.6"/><path d="M1.5 26l12-7 6 3.5-12 7z" fill="#fff" stroke="#2fae52" stroke-width="1.3" stroke-linejoin="round"/><path d="M1.5 22l12-7 6 3.5-12 7z" fill="#fff" stroke="#2fae52" stroke-width="1.3" stroke-linejoin="round"/><path d="M1.5 18l12-7 6 3.5-12 7z" fill="#fff" stroke="#2fae52" stroke-width="1.3" stroke-linejoin="round"/><path d="M6 15.5l7 4v5" fill="none" stroke="#555" stroke-width="1"/></svg>
<div class="t" style="left:1356.3px;top:740.43px;font-size:11.5px;line-height:11.5px;font-weight:400;color:#262626;letter-spacing:0.215px;">Paie et Facturation</div>
<svg class="a" style="left:1490px;top:736px;" width="18" height="18" viewBox="0 0 36 36"><g transform="translate(-3,-1.5)"><path d="M9 20.5c0-3 2-5 4.6-5s4.6 2 4.6 5v5.5c0 1 .8 1.5 1.2 2M9 20.5v5.5c0 1-.8 1.5-1.2 2M9.5 22c2.4 0 5.2-.8 6.6-2.5" fill="none" stroke="#3c3c3c" stroke-width="1.4"/><path d="M11 23.5c0 2 1 3.8 2.6 3.8s2.6-1.8 2.6-3.8" fill="none" stroke="#3c3c3c" stroke-width="1.1"/><path d="M5.5 35.5c.6-4 3-6.5 5.8-7.5l2.3 5.8 2.3-5.8c2.8 1 5.2 3.5 5.8 7.5" fill="none" stroke="#3c3c3c" stroke-width="1.4"/><path d="M12 15.5V11c0-2 1.2-3 3-3h5.5M18.5 5.5l2.6 2.5-2.6 2.5" fill="none" stroke="#777" stroke-width="1.4"/><path d="M24 9c0-3.5 2-5.5 4.6-5.5s4.6 2 4.6 5.5v4.5c0 1 .6 1.3 1 1.6M24 9v4.5c0 1-.6 1.3-1 1.6M24.5 10c2.2 0 4.8-.7 6.4-2.5" fill="none" stroke="#b165c2" stroke-width="1.3"/><path d="M21.5 21c.5-3 2-4.8 4-5.8M35.5 21c-.5-3-2-4.8-4-5.8" fill="none" stroke="#b165c2" stroke-width="1.3"/><path d="M26.2 19.5c0-1.5 1.1-2.5 2.4-2.5s2.4 1 2.4 2.3c0 1.8-2.4 2-2.4 4.2M28.6 26.2v.8" fill="none" stroke="#666" stroke-width="1.2"/></g></svg>
<div class="t" style="left:1510.3px;top:740.43px;font-size:11.5px;line-height:11.5px;font-weight:400;color:#262626;letter-spacing:-0.096px;">Employés associés</div>
<svg class="a" style="left:1641px;top:737px;" width="18" height="17" viewBox="0 0 36 34"><ellipse cx="23.5" cy="20" rx="8.3" ry="3.3" fill="#fff" stroke="#ef8a3a" stroke-width="1.3"/><ellipse cx="24.5" cy="16.5" rx="8.3" ry="3.3" fill="#fff" stroke="#ef8a3a" stroke-width="1.3"/><ellipse cx="25" cy="13" rx="8.3" ry="3.3" fill="#fff" stroke="#ef8a3a" stroke-width="1.3"/><ellipse cx="24.5" cy="9.5" rx="8.3" ry="3.3" fill="#fff" stroke="#ef8a3a" stroke-width="1.3"/><ellipse cx="23" cy="5" rx="8.3" ry="3.3" fill="#fff" stroke="#ef8a3a" stroke-width="1.3"/><circle cx="10" cy="16" r="5.5" fill="#fff" stroke="#444" stroke-width="1.5"/><path d="M1.5 32.5c.8-6 4-9.5 8.5-9.5s7.7 3.5 8.5 9.5M10 24.5v7.5" fill="none" stroke="#444" stroke-width="1.5"/></svg>
<div class="t" style="left:1660.8px;top:740.43px;font-size:11.5px;line-height:11.5px;font-weight:400;color:#262626;letter-spacing:0.138px;">Commission</div>
<div class="a" style="left:1019px;top:758px;width:960px;height:6px;background:#f7f7f7"></div>
<div class="a" style="left:1019px;top:764px;width:960px;height:37px;background:#efefef"></div>
<div class="a" style="left:1019px;top:801px;width:941px;height:182px;background:#f7f7f7"></div>
<div class="a" style="left:1031px;top:813px;width:922px;height:170px;background:#ffffff"></div>
<div class="a" style="left:1960px;top:801px;width:19px;height:182px;background:#f0f0f0"></div>
<svg class="a" style="left:1027px;top:769px;" width="25" height="25" viewBox="0 0 34 34"><path d="M4.2 3.5V1.8h24.3v4.5M28.5 15v16.5H4.2v-1.7" fill="none" stroke="#444" stroke-width="1.5"/><path d="M1.5 4.6h4.8" stroke="#444" stroke-width="1.5"/><path d="M1.5 7.9h4.8" stroke="#444" stroke-width="1.5"/><path d="M1.5 11.1h4.8" stroke="#444" stroke-width="1.5"/><path d="M1.5 14.3h4.8" stroke="#444" stroke-width="1.5"/><path d="M1.5 17.6h4.8" stroke="#444" stroke-width="1.5"/><path d="M1.5 20.8h4.8" stroke="#444" stroke-width="1.5"/><path d="M1.5 24h4.8" stroke="#444" stroke-width="1.5"/><path d="M1.5 27.3h4.8" stroke="#444" stroke-width="1.5"/><path d="M13 26l1.2-4.8 13.4-13.4c.8-.8 2-.8 2.8 0l.5.5c.8.8.8 2 0 2.8L17.5 24.5zM25.5 10l3.3 3.3" fill="none" stroke="#3a9ad9" stroke-width="1.4" stroke-linejoin="round"/></svg>
<div class="t" style="left:1063.5px;top:772.6px;font-size:20px;line-height:20px;font-weight:400;color:#1763c9;letter-spacing:-0.562px;">Notes</div>
<svg class="a" style="left:1940px;top:776.5px;" width="14" height="14" viewBox="0 0 14 14"><path d="M5 1.5h4M5.5 1.5v5.5M8.5 1.5v5.5" fill="none" stroke="#5e5e5e" stroke-width="1.3"/><path d="M3.5 7.2h7" stroke="#5e5e5e" stroke-width="1.6"/><path d="M7 7.5v4" stroke="#777" stroke-width="1.2"/></svg>
<svg class="a" style="left:1962px;top:777.5px;" width="10" height="10" viewBox="0 0 10 10"><path d="M1.2 1.2l7.6 7.6M8.8 1.2L1.2 8.8" stroke="#626262" stroke-width="1.6"/></svg>
<svg class="a" style="left:1963px;top:806.5px;" width="12" height="8" viewBox="0 0 12 8"><path d="M1 6.5L6 1.5l5 5z" fill="#606060"/></svg>
<div class="a" style="left:1965px;top:819px;width:9px;height:84px;background:#cdcdcd;border-radius:4.5px"></div>
<svg class="a" style="left:1963px;top:971px;" width="12" height="8" viewBox="0 0 12 8"><path d="M1 1.5L6 6.5l5-5z" fill="#606060"/></svg>
<div class="t" style="left:1041.5px;top:831.5px;font-size:14px;line-height:14px;font-weight:400;color:#9a93ee;letter-spacing:0.028px;">Notes du quart</div>
<div class="t" style="left:1892.7px;top:829.2px;font-size:14px;line-height:14px;font-weight:400;color:#555;letter-spacing:-0.028px;">Modifier</div>
<div class="a" style="left:1019px;top:983px;width:960px;height:1px;background:#c9c9c9"></div>
<div class="a" style="left:1019px;top:984px;width:960px;height:25px;background:#efefef"></div>
<div class="a" style="left:1019px;top:983px;width:83px;height:23px;background:#f7f7f7;border:1px solid #c6c6c6;border-top:none"></div>
<svg class="a" style="left:1024px;top:986px;" width="17" height="17" viewBox="0 0 34 34"><path d="M4.2 3.5V1.8h24.3v4.5M28.5 15v16.5H4.2v-1.7" fill="none" stroke="#444" stroke-width="1.5"/><path d="M1.5 4.6h4.8" stroke="#444" stroke-width="1.5"/><path d="M1.5 7.9h4.8" stroke="#444" stroke-width="1.5"/><path d="M1.5 11.1h4.8" stroke="#444" stroke-width="1.5"/><path d="M1.5 14.3h4.8" stroke="#444" stroke-width="1.5"/><path d="M1.5 17.6h4.8" stroke="#444" stroke-width="1.5"/><path d="M1.5 20.8h4.8" stroke="#444" stroke-width="1.5"/><path d="M1.5 24h4.8" stroke="#444" stroke-width="1.5"/><path d="M1.5 27.3h4.8" stroke="#444" stroke-width="1.5"/><path d="M13 26l1.2-4.8 13.4-13.4c.8-.8 2-.8 2.8 0l.5.5c.8.8.8 2 0 2.8L17.5 24.5zM25.5 10l3.3 3.3" fill="none" stroke="#3a9ad9" stroke-width="1.4" stroke-linejoin="round"/></svg>
<div class="t" style="left:1042.8px;top:988.52px;font-size:11.5px;line-height:11.5px;font-weight:400;color:#262626;letter-spacing:0.19px;">Notes</div>
<svg class="a" style="left:1086.5px;top:991px;" width="10" height="10" viewBox="0 0 10 10"><path d="M1 1l8 8M9 1L1 9" stroke="#555" stroke-width="1.2"/></svg>
<svg class="a" style="left:1107px;top:986px;" width="18" height="18" viewBox="0 0 36 36"><path d="M6 28.5C3 25.5 1.5 21.7 1.5 17.7 1.5 8.8 8.8 1.5 17.7 1.5S33.9 8.8 33.9 17.7 26.6 33.9 17.7 33.9c-2.8 0-5.5-.7-7.8-2L2.5 34.3z" fill="none" stroke="#444" stroke-width="1.5" stroke-linejoin="round"/><circle cx="17.5" cy="10.2" r="2.1" fill="none" stroke="#444" stroke-width="1.4"/><path d="M15 15.3h4.2v9.4h1.8v3.6h-7.2v-3.6h1.6v-5.8H15z" fill="none" stroke="#444" stroke-width="1.4" stroke-linejoin="round"/></svg>
<div class="t" style="left:1126.6px;top:988.52px;font-size:11.5px;line-height:11.5px;font-weight:400;color:#262626;letter-spacing:-0.173px;">Avis</div>
<svg class="a" style="left:1181px;top:987px;" width="17" height="15" viewBox="0 0 17 15"><path d="M2.5 4V2h5l1.5 1.5h6.5v2" fill="none" stroke="#555" stroke-width="1"/><path d="M1 5h15.5l-1 9H2z" fill="#fff" stroke="#555" stroke-width="1"/></svg>
<div class="t" style="left:1200.6px;top:988.52px;font-size:11.5px;line-height:11.5px;font-weight:400;color:#262626;letter-spacing:0.351px;">Gestion documents</div>
<div class="a" style="left:803px;top:69px;width:772px;height:102px;border:6px solid #ff0000"></div>
<svg class="a" style="left:0;top:0" width="1981" height="1011" viewBox="0 0 1981 1011"><path d="M726 63.3L796 93.3" stroke="#ff0000" stroke-width="5.6"/><path d="M810 99.4L789 100.7L797 83.6z" fill="#ff0000"/><path d="M532.5 118L439 235" stroke="#ff0000" stroke-width="5.8"/><path d="M424.8 252.3L430 232L444 244.5z" fill="#ff0000"/></svg>
</body></html>
